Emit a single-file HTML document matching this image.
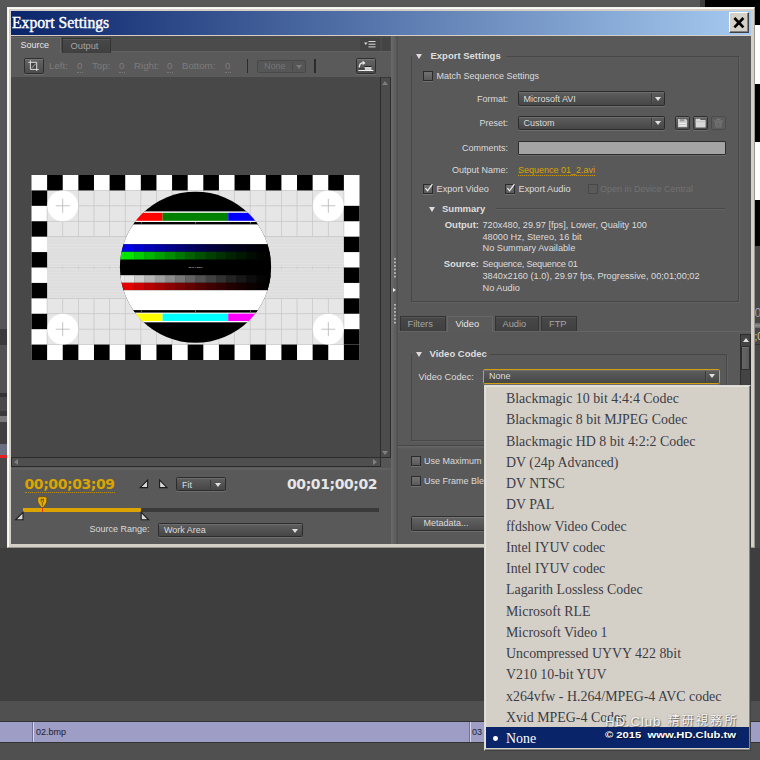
<!DOCTYPE html>
<html><head><meta charset="utf-8"><title>Export Settings</title>
<style>
html,body{margin:0;padding:0;}
body{width:760px;height:760px;overflow:hidden;position:relative;background:#3e3e3e;font-family:"Liberation Sans",sans-serif;font-size:9px;color:#dcdcdc;}
.a{position:absolute;}
.t{position:absolute;white-space:pre;line-height:12px;height:12px;}
.b{font-weight:bold;font-size:9.5px;color:#dedede;}
.s{font-size:9.2px;}
.r{text-align:right;}
.combo{position:absolute;box-sizing:border-box;border:1px solid #2c2c2c;border-radius:1.5px;background:linear-gradient(#5e5e5e,#464646);box-shadow:0 1px 0 rgba(255,255,255,.13),inset 0 1px 0 rgba(255,255,255,.1);}
.sep{position:absolute;width:1px;top:1px;bottom:1px;background:#3a3a3a;box-shadow:1px 0 0 rgba(255,255,255,.06);}
.combo .t{left:5px;top:0.5px;}
.arr{position:absolute;width:0;height:0;border-left:3.5px solid transparent;border-right:3.5px solid transparent;border-top:5px solid #e0e0e0;}
.cb{position:absolute;box-sizing:border-box;width:10px;height:10px;border:1px solid #2c2c2c;background:linear-gradient(#727272,#5a5a5a);box-shadow:0 1px 0 rgba(255,255,255,.15);}
.tab{position:absolute;box-sizing:border-box;height:15px;background:linear-gradient(#484848,#404040);border:1px solid #343434;border-bottom:none;box-shadow:inset 0 1px 0 rgba(255,255,255,.08);color:#a4a4a4;text-align:left;padding-left:8px;line-height:14px;white-space:pre;}
.tab.on{background:#5a5a5a;border-color:#666;color:#e6e6e6;box-shadow:none;}
.gb{position:absolute;box-sizing:border-box;border:1px solid #474747;box-shadow:1px 1px 0 rgba(255,255,255,.06);}
.btn{position:absolute;box-sizing:border-box;border:1px solid #2e2e2e;border-radius:1.5px;background:linear-gradient(#646464,#4c4c4c);box-shadow:0 1px 0 rgba(255,255,255,.12),inset 0 1px 0 rgba(255,255,255,.12);}
.pi{position:absolute;left:21.5px;margin-top:-.5px;white-space:pre;font-family:"Liberation Serif",serif;font-size:13.9px;line-height:21px;height:21px;color:#3c3c46;}
</style></head><body>

<!-- ===== background application (behind dialog) ===== -->
<div class="a" style="left:0;top:0;width:760px;height:8px;background:#585858"></div>
<div class="a" style="left:0;top:7px;width:8px;height:323px;background:#565656"></div>
<div class="a" style="left:0;top:329px;width:8px;height:16px;background:#3a3a3a"></div>
<div class="a" style="left:0;top:345px;width:8px;height:48px;background:#525252"></div>
<div class="a" style="left:0;top:393px;width:8px;height:4px;background:#333"></div>
<div class="a" style="left:0;top:397px;width:8px;height:14px;background:#4a4a4a"></div>
<div class="a" style="left:0;top:411px;width:8px;height:5px;background:#3a3a3a"></div>
<div class="a" style="left:0;top:416px;width:8px;height:6px;background:#7a7a7a"></div>
<div class="a" style="left:0;top:422px;width:8px;height:22px;background:#404040"></div>
<div class="a" style="left:0;top:444px;width:8px;height:11px;background:#6c6f80"></div>
<div class="a" style="left:0;top:455px;width:8px;height:3px;background:#e62020"></div>
<div class="a" style="left:0;top:458px;width:8px;height:100px;background:#484848"></div>
<!-- right strip -->
<div class="a" style="left:752px;top:0;width:8px;height:25px;background:#000"></div>
<div class="a" style="left:752px;top:25px;width:8px;height:59px;background:#fff"></div>
<div class="a" style="left:752px;top:84px;width:8px;height:58px;background:#000"></div>
<div class="a" style="left:752px;top:142px;width:8px;height:58px;background:#fff"></div>
<div class="a" style="left:752px;top:200px;width:8px;height:46px;background:#000"></div>
<div class="a" style="left:752px;top:246px;width:8px;height:320px;background:#484848"></div>
<div class="a" style="left:700px;top:0;width:5px;height:8px;background:#3c3c3c"></div>
<div class="a" style="left:704.5px;top:0;width:56px;height:8px;background:#000"></div>
<div class="t" style="left:754.5px;top:305.5px;font-size:12px;line-height:14px;color:#9ca2b6;">0.</div>
<div class="a" style="left:755px;top:322.5px;width:5px;height:5px;background:linear-gradient(#6a6a6a,#8c8c8c 50%,#6a6a6a)"></div>
<div class="t" style="left:754.5px;top:330.5px;font-size:10px;color:#d8d0a8;">;0</div><div class="a" style="left:755px;top:343.5px;width:5px;height:1px;background:#333"></div>
<!-- bottom timeline -->
<div class="a" style="left:0;top:548px;width:760px;height:153px;background:#3e3e3e"></div>
<div class="a" style="left:0;top:701px;width:760px;height:59px;background:#505050"></div>
<div class="a" style="left:0;top:721px;width:760px;height:22px;background:#333"></div>
<div class="a" style="left:0;top:722px;width:760px;height:20px;background:#9d9dc6"></div>
<div class="a" style="left:33px;top:722px;width:1px;height:20px;background:#d8d8e8"></div>
<div class="a" style="left:32px;top:722px;width:1px;height:20px;background:#70709a"></div>
<div class="a" style="left:469px;top:722px;width:1px;height:20px;background:#70709a"></div>
<div class="a" style="left:470px;top:722px;width:1px;height:20px;background:#d8d8e8"></div>
<div class="t" style="left:36px;top:726px;color:#1c1c30;font-size:9px;">02.bmp</div>
<div class="t" style="left:472px;top:726px;color:#1c1c30;font-size:9px;">03</div>

<!-- ===== dialog window ===== -->
<div class="a" id="win" style="left:7px;top:7px;width:748px;height:541px;background:#d4d0c8;box-sizing:border-box;border:1px solid #f4f2ec;border-right-color:#9a978f;border-bottom-color:#9a978f;box-shadow:inset 1px 1px 0 #fbfaf6;"></div>
<div class="a" style="left:11px;top:11px;width:740px;height:24px;background:linear-gradient(90deg,#0a246a 0%,#a6caf0 100%)"></div>
<div class="t" style="left:12px;top:13px;font-family:'Liberation Serif',serif;font-size:15.7px;line-height:20px;height:20px;color:#fff;-webkit-text-stroke:.4px #fff;">Export Settings</div>
<!-- close button -->
<div class="a" style="left:729px;top:12px;width:20px;height:21px;box-sizing:border-box;background:#d4d0c8;border:1px solid #fff;border-right-color:#404040;border-bottom-color:#404040;box-shadow:inset -1px -1px 0 #808080;"></div>
<svg class="a" style="left:729px;top:12px" width="20" height="21" viewBox="0 0 20 21"><path d="M5.4 6 L14.4 15.4 M14.4 6 L5.4 15.4" stroke="#000" stroke-width="2.7" fill="none"/></svg>

<!-- content bg -->
<div class="a" style="left:11px;top:36px;width:740px;height:508px;background:#595959"></div>

<!-- ===== left panel ===== -->
<div class="a" style="left:11px;top:36px;width:380px;height:16px;background:#4b4b4b"></div>
<div class="a" style="left:11px;top:52px;width:380px;height:25px;background:#5a5a5a"></div>
<div class="a" style="left:11px;top:51px;width:380px;height:1px;background:#606060"></div>
<div class="tab on" style="left:11px;top:37px;width:50px;height:16px;border-left:none;padding-left:9.4px;">Source</div>
<div class="tab" style="left:61.5px;top:37.5px;width:49px;padding-left:8px;font-size:9.3px;">Output</div>
<!-- panel menu -->
<div class="a" style="left:360px;top:38px;width:20px;height:13px;background:#444;border-radius:1px;"></div>
<svg class="a" style="left:360px;top:38px" width="20" height="13"><path d="M4 4.5h3.6l-1.8 2.4z" fill="#d8d8d8"/><path d="M8.5 3.5h7M8.5 6.2h7M8.5 8.9h7" stroke="#d8d8d8" stroke-width="1"/></svg>
<div class="a" style="left:382px;top:38px;width:8px;height:13px;background:#444;"></div>
<!-- crop toolbar -->
<div class="btn" style="left:24px;top:58px;width:20px;height:16px;border-radius:1.5px;"></div>
<svg class="a" style="left:24px;top:58px" width="20" height="16"><rect x="6.9" y="4.8" width="5.4" height="6.2" fill="#444"/><path d="M6.4 2.4v9h8.4M4.3 4.3h8.4v8.7" stroke="#dcdcdc" stroke-width="1" fill="none"/><path d="M7.4 10.4l4.5-4.9" stroke="#c8c8c8" stroke-width=".8"/></svg>
<div class="t" style="left:49px;top:60px;color:#7c7c7c;font-size:9.7px;">Left:</div>
<div class="t" style="left:76.5px;top:60px;color:#7c7c7c;font-size:9.7px;border-bottom:1px dotted #787878;height:11.5px;padding:0 .5px;">0</div>
<div class="t" style="left:92px;top:60px;color:#7c7c7c;font-size:9.7px;">Top:</div>
<div class="t" style="left:118.5px;top:60px;color:#7c7c7c;font-size:9.7px;border-bottom:1px dotted #787878;height:11.5px;padding:0 .5px;">0</div>
<div class="t" style="left:134px;top:60px;color:#7c7c7c;font-size:9.7px;">Right:</div>
<div class="t" style="left:166.5px;top:60px;color:#7c7c7c;font-size:9.7px;border-bottom:1px dotted #787878;height:11.5px;padding:0 .5px;">0</div>
<div class="t" style="left:182px;top:60px;color:#7c7c7c;font-size:9.7px;">Bottom:</div>
<div class="t" style="left:224.5px;top:60px;color:#7c7c7c;font-size:9.7px;border-bottom:1px dotted #787878;height:11.5px;padding:0 .5px;">0</div>
<div class="a" style="left:246.6px;top:59px;width:1.6px;height:13.6px;background:#2c2c2c;"></div>
<div class="a" style="left:257px;top:60px;width:49px;height:13px;box-sizing:border-box;border:1px solid #484848;border-radius:2px;background:#565656;"></div>
<div class="t" style="left:264px;top:60px;color:#757575;">None</div>
<div class="a" style="left:292px;top:62px;width:1px;height:9px;background:#4a4a4a;"></div>
<div class="arr" style="left:296px;top:65px;border-top-color:#7a7a7a;border-left-width:3px;border-right-width:3px;border-top-width:4px;"></div>
<div class="a" style="left:314.3px;top:59px;width:1.6px;height:13.6px;background:#2c2c2c;"></div>
<div class="btn" style="left:355.5px;top:58px;width:20.5px;height:16px;border-radius:1.5px;"></div>
<svg class="a" style="left:355.5px;top:58px" width="21" height="16"><rect x="2.4" y="11.9" width="15" height="1.1" fill="#f0f0f0"/><rect x="8.6" y="9" width="6.9" height="2.9" fill="#d6d6d6"/><rect x="8.6" y="8" width="6.9" height="1" fill="#222"/><rect x="2.6" y="10" width="6" height="1.7" fill="#3e3e3e"/><path d="M3.3 9.4Q3.3 4.9 7 4.9" stroke="#e8e8e8" stroke-width="1.3" fill="none"/><path d="M6.6 2.5L9.5 4.9L6.6 7.2z" fill="#e8e8e8"/></svg>

<!-- preview area -->
<div class="a" style="left:11px;top:77px;width:369px;height:380.5px;background:#484848;"></div>
<svg class="a" style="left:0;top:0" width="400" height="400" viewBox="0 0 400 400">
<rect x="31.5" y="175" width="328" height="185" fill="#fff"/>
<rect x="47.12" y="190.42" width="296.76" height="154.17" fill="#e6e6e6"/>
<rect x="47.12" y="236.67" width="296.76" height="61.67" fill="#dedede"/>
<rect x="47.12" y="238.17" width="296.76" height="0.8" fill="#e4e4e4"/>
<rect x="47.12" y="241.27" width="296.76" height="0.8" fill="#e4e4e4"/>
<rect x="47.12" y="244.37" width="296.76" height="0.8" fill="#e4e4e4"/>
<rect x="47.12" y="247.47" width="296.76" height="0.8" fill="#e4e4e4"/>
<rect x="47.12" y="250.57" width="296.76" height="0.8" fill="#e4e4e4"/>
<rect x="47.12" y="253.67" width="296.76" height="0.8" fill="#e4e4e4"/>
<rect x="47.12" y="256.77" width="296.76" height="0.8" fill="#e4e4e4"/>
<rect x="47.12" y="259.87" width="296.76" height="0.8" fill="#e4e4e4"/>
<rect x="47.12" y="262.97" width="296.76" height="0.8" fill="#e4e4e4"/>
<rect x="47.12" y="266.07" width="296.76" height="0.8" fill="#e4e4e4"/>
<rect x="47.12" y="269.17" width="296.76" height="0.8" fill="#e4e4e4"/>
<rect x="47.12" y="272.27" width="296.76" height="0.8" fill="#e4e4e4"/>
<rect x="47.12" y="275.37" width="296.76" height="0.8" fill="#e4e4e4"/>
<rect x="47.12" y="278.47" width="296.76" height="0.8" fill="#e4e4e4"/>
<rect x="47.12" y="281.57" width="296.76" height="0.8" fill="#e4e4e4"/>
<rect x="47.12" y="284.67" width="296.76" height="0.8" fill="#e4e4e4"/>
<rect x="47.12" y="287.77" width="296.76" height="0.8" fill="#e4e4e4"/>
<rect x="47.12" y="290.87" width="296.76" height="0.8" fill="#e4e4e4"/>
<rect x="47.12" y="293.97" width="296.76" height="0.8" fill="#e4e4e4"/>
<rect x="47.12" y="297.07" width="296.76" height="0.8" fill="#e4e4e4"/>
<rect x="46.77" y="190.42" width="0.7" height="46.25" fill="#c4c4c4"/>
<rect x="46.77" y="298.33" width="0.7" height="46.25" fill="#c4c4c4"/>
<rect x="46.77" y="265.50" width="0.7" height="4" fill="#cfcfcf"/>
<rect x="62.39" y="190.42" width="0.7" height="46.25" fill="#c4c4c4"/>
<rect x="62.39" y="298.33" width="0.7" height="46.25" fill="#c4c4c4"/>
<rect x="62.39" y="265.50" width="0.7" height="4" fill="#cfcfcf"/>
<rect x="78.01" y="190.42" width="0.7" height="46.25" fill="#c4c4c4"/>
<rect x="78.01" y="298.33" width="0.7" height="46.25" fill="#c4c4c4"/>
<rect x="78.01" y="265.50" width="0.7" height="4" fill="#cfcfcf"/>
<rect x="93.63" y="190.42" width="0.7" height="46.25" fill="#c4c4c4"/>
<rect x="93.63" y="298.33" width="0.7" height="46.25" fill="#c4c4c4"/>
<rect x="93.63" y="265.50" width="0.7" height="4" fill="#cfcfcf"/>
<rect x="109.25" y="190.42" width="0.7" height="46.25" fill="#c4c4c4"/>
<rect x="109.25" y="298.33" width="0.7" height="46.25" fill="#c4c4c4"/>
<rect x="109.25" y="265.50" width="0.7" height="4" fill="#cfcfcf"/>
<rect x="124.86" y="190.42" width="0.7" height="46.25" fill="#c4c4c4"/>
<rect x="124.86" y="298.33" width="0.7" height="46.25" fill="#c4c4c4"/>
<rect x="124.86" y="265.50" width="0.7" height="4" fill="#cfcfcf"/>
<rect x="140.48" y="190.42" width="0.7" height="46.25" fill="#c4c4c4"/>
<rect x="140.48" y="298.33" width="0.7" height="46.25" fill="#c4c4c4"/>
<rect x="140.48" y="265.50" width="0.7" height="4" fill="#cfcfcf"/>
<rect x="156.10" y="190.42" width="0.7" height="46.25" fill="#c4c4c4"/>
<rect x="156.10" y="298.33" width="0.7" height="46.25" fill="#c4c4c4"/>
<rect x="156.10" y="265.50" width="0.7" height="4" fill="#cfcfcf"/>
<rect x="171.72" y="190.42" width="0.7" height="46.25" fill="#c4c4c4"/>
<rect x="171.72" y="298.33" width="0.7" height="46.25" fill="#c4c4c4"/>
<rect x="171.72" y="265.50" width="0.7" height="4" fill="#cfcfcf"/>
<rect x="187.34" y="190.42" width="0.7" height="46.25" fill="#c4c4c4"/>
<rect x="187.34" y="298.33" width="0.7" height="46.25" fill="#c4c4c4"/>
<rect x="187.34" y="265.50" width="0.7" height="4" fill="#cfcfcf"/>
<rect x="202.96" y="190.42" width="0.7" height="46.25" fill="#c4c4c4"/>
<rect x="202.96" y="298.33" width="0.7" height="46.25" fill="#c4c4c4"/>
<rect x="202.96" y="265.50" width="0.7" height="4" fill="#cfcfcf"/>
<rect x="218.58" y="190.42" width="0.7" height="46.25" fill="#c4c4c4"/>
<rect x="218.58" y="298.33" width="0.7" height="46.25" fill="#c4c4c4"/>
<rect x="218.58" y="265.50" width="0.7" height="4" fill="#cfcfcf"/>
<rect x="234.20" y="190.42" width="0.7" height="46.25" fill="#c4c4c4"/>
<rect x="234.20" y="298.33" width="0.7" height="46.25" fill="#c4c4c4"/>
<rect x="234.20" y="265.50" width="0.7" height="4" fill="#cfcfcf"/>
<rect x="249.82" y="190.42" width="0.7" height="46.25" fill="#c4c4c4"/>
<rect x="249.82" y="298.33" width="0.7" height="46.25" fill="#c4c4c4"/>
<rect x="249.82" y="265.50" width="0.7" height="4" fill="#cfcfcf"/>
<rect x="265.44" y="190.42" width="0.7" height="46.25" fill="#c4c4c4"/>
<rect x="265.44" y="298.33" width="0.7" height="46.25" fill="#c4c4c4"/>
<rect x="265.44" y="265.50" width="0.7" height="4" fill="#cfcfcf"/>
<rect x="281.05" y="190.42" width="0.7" height="46.25" fill="#c4c4c4"/>
<rect x="281.05" y="298.33" width="0.7" height="46.25" fill="#c4c4c4"/>
<rect x="281.05" y="265.50" width="0.7" height="4" fill="#cfcfcf"/>
<rect x="296.67" y="190.42" width="0.7" height="46.25" fill="#c4c4c4"/>
<rect x="296.67" y="298.33" width="0.7" height="46.25" fill="#c4c4c4"/>
<rect x="296.67" y="265.50" width="0.7" height="4" fill="#cfcfcf"/>
<rect x="312.29" y="190.42" width="0.7" height="46.25" fill="#c4c4c4"/>
<rect x="312.29" y="298.33" width="0.7" height="46.25" fill="#c4c4c4"/>
<rect x="312.29" y="265.50" width="0.7" height="4" fill="#cfcfcf"/>
<rect x="327.91" y="190.42" width="0.7" height="46.25" fill="#c4c4c4"/>
<rect x="327.91" y="298.33" width="0.7" height="46.25" fill="#c4c4c4"/>
<rect x="327.91" y="265.50" width="0.7" height="4" fill="#cfcfcf"/>
<rect x="343.53" y="190.42" width="0.7" height="46.25" fill="#c4c4c4"/>
<rect x="343.53" y="298.33" width="0.7" height="46.25" fill="#c4c4c4"/>
<rect x="343.53" y="265.50" width="0.7" height="4" fill="#cfcfcf"/>
<rect x="47.12" y="190.07" width="296.76" height="0.7" fill="#c4c4c4"/>
<rect x="47.12" y="205.48" width="296.76" height="0.7" fill="#c4c4c4"/>
<rect x="47.12" y="220.90" width="296.76" height="0.7" fill="#c4c4c4"/>
<rect x="47.12" y="236.32" width="296.76" height="0.7" fill="#c4c4c4"/>
<rect x="47.12" y="297.98" width="296.76" height="0.7" fill="#c4c4c4"/>
<rect x="47.12" y="313.40" width="296.76" height="0.7" fill="#c4c4c4"/>
<rect x="47.12" y="328.82" width="296.76" height="0.7" fill="#c4c4c4"/>
<rect x="47.12" y="344.23" width="296.76" height="0.7" fill="#c4c4c4"/>
<rect x="47.12" y="267.20" width="296.76" height="0.6" fill="#cfcfcf"/>
<rect x="31.50" y="344.58" width="15.62" height="15.42" fill="#000"/>
<rect x="47.12" y="175" width="15.62" height="15.42" fill="#000"/>
<rect x="62.74" y="344.58" width="15.62" height="15.42" fill="#000"/>
<rect x="78.36" y="175" width="15.62" height="15.42" fill="#000"/>
<rect x="93.98" y="344.58" width="15.62" height="15.42" fill="#000"/>
<rect x="109.60" y="175" width="15.62" height="15.42" fill="#000"/>
<rect x="125.21" y="344.58" width="15.62" height="15.42" fill="#000"/>
<rect x="140.83" y="175" width="15.62" height="15.42" fill="#000"/>
<rect x="156.45" y="344.58" width="15.62" height="15.42" fill="#000"/>
<rect x="172.07" y="175" width="15.62" height="15.42" fill="#000"/>
<rect x="187.69" y="344.58" width="15.62" height="15.42" fill="#000"/>
<rect x="203.31" y="175" width="15.62" height="15.42" fill="#000"/>
<rect x="218.93" y="344.58" width="15.62" height="15.42" fill="#000"/>
<rect x="234.55" y="175" width="15.62" height="15.42" fill="#000"/>
<rect x="250.17" y="344.58" width="15.62" height="15.42" fill="#000"/>
<rect x="265.79" y="175" width="15.62" height="15.42" fill="#000"/>
<rect x="281.40" y="344.58" width="15.62" height="15.42" fill="#000"/>
<rect x="297.02" y="175" width="15.62" height="15.42" fill="#000"/>
<rect x="312.64" y="344.58" width="15.62" height="15.42" fill="#000"/>
<rect x="328.26" y="175" width="15.62" height="15.42" fill="#000"/>
<rect x="343.88" y="344.58" width="15.62" height="15.42" fill="#000"/>
<rect x="31.50" y="190.42" width="15.62" height="15.42" fill="#000"/>
<rect x="343.88" y="205.83" width="15.62" height="15.42" fill="#000"/>
<rect x="31.50" y="221.25" width="15.62" height="15.42" fill="#000"/>
<rect x="343.88" y="236.67" width="15.62" height="15.42" fill="#000"/>
<rect x="31.50" y="252.08" width="15.62" height="15.42" fill="#000"/>
<rect x="343.88" y="267.50" width="15.62" height="15.42" fill="#000"/>
<rect x="31.50" y="282.92" width="15.62" height="15.42" fill="#000"/>
<rect x="343.88" y="298.33" width="15.62" height="15.42" fill="#000"/>
<rect x="31.50" y="313.75" width="15.62" height="15.42" fill="#000"/>
<rect x="343.88" y="329.17" width="15.62" height="15.42" fill="#000"/>
<circle cx="62.74" cy="205.83" r="15.4" fill="#fff"/>
<rect x="55.74" y="205.43" width="14" height="0.8" fill="#b4b4b4"/>
<rect x="62.34" y="198.83" width="0.8" height="14" fill="#b4b4b4"/>
<circle cx="328.26" cy="205.83" r="15.4" fill="#fff"/>
<rect x="321.26" y="205.43" width="14" height="0.8" fill="#b4b4b4"/>
<rect x="327.86" y="198.83" width="0.8" height="14" fill="#b4b4b4"/>
<circle cx="62.74" cy="329.17" r="15.4" fill="#fff"/>
<rect x="55.74" y="328.77" width="14" height="0.8" fill="#b4b4b4"/>
<rect x="62.34" y="322.17" width="0.8" height="14" fill="#b4b4b4"/>
<circle cx="328.26" cy="329.17" r="15.4" fill="#fff"/>
<rect x="321.26" y="328.77" width="14" height="0.8" fill="#b4b4b4"/>
<rect x="327.86" y="322.17" width="0.8" height="14" fill="#b4b4b4"/>
<clipPath id="cc"><circle cx="195.5" cy="267.25" r="75.6"/></clipPath>
<g clip-path="url(#cc)">
<rect x="118.90" y="190.65" width="153.20" height="153.20" fill="#000"/>
<rect x="118.90" y="211.40" width="153.20" height="10.60" fill="#fff"/>
<rect x="118.90" y="212.8" width="43.70" height="8.00" fill="#ff0000"/>
<rect x="162.6" y="212.8" width="65.60" height="8.00" fill="#008000"/>
<rect x="228.2" y="212.8" width="43.90" height="8.00" fill="#0000ff"/>
<rect x="118.90" y="222.00" width="153.20" height="2.40" fill="#000"/>
<rect x="118.90" y="224.40" width="153.20" height="19.90" fill="#fff"/>
<rect x="113.90" y="244.3" width="10.50" height="7.50" fill="rgb(0,0,236)"/>
<rect x="124.10" y="244.3" width="10.50" height="7.50" fill="rgb(0,0,230)"/>
<rect x="134.30" y="244.3" width="10.50" height="7.50" fill="rgb(0,0,206)"/>
<rect x="144.50" y="244.3" width="10.50" height="7.50" fill="rgb(0,0,182)"/>
<rect x="154.70" y="244.3" width="10.50" height="7.50" fill="rgb(0,0,160)"/>
<rect x="164.90" y="244.3" width="10.50" height="7.50" fill="rgb(0,0,139)"/>
<rect x="175.10" y="244.3" width="10.50" height="7.50" fill="rgb(0,0,119)"/>
<rect x="185.30" y="244.3" width="10.50" height="7.50" fill="rgb(0,0,99)"/>
<rect x="195.50" y="244.3" width="10.50" height="7.50" fill="rgb(0,0,81)"/>
<rect x="205.70" y="244.3" width="10.50" height="7.50" fill="rgb(0,0,65)"/>
<rect x="215.90" y="244.3" width="10.50" height="7.50" fill="rgb(0,0,49)"/>
<rect x="226.10" y="244.3" width="10.50" height="7.50" fill="rgb(0,0,35)"/>
<rect x="236.30" y="244.3" width="10.50" height="7.50" fill="rgb(0,0,23)"/>
<rect x="246.50" y="244.3" width="10.50" height="7.50" fill="rgb(0,0,12)"/>
<rect x="256.70" y="244.3" width="10.50" height="7.50" fill="rgb(0,0,4)"/>
<rect x="266.90" y="244.3" width="10.50" height="7.50" fill="rgb(0,0,0)"/>
<rect x="113.90" y="251.8" width="10.50" height="7.70" fill="rgb(0,236,0)"/>
<rect x="124.10" y="251.8" width="10.50" height="7.70" fill="rgb(0,230,0)"/>
<rect x="134.30" y="251.8" width="10.50" height="7.70" fill="rgb(0,206,0)"/>
<rect x="144.50" y="251.8" width="10.50" height="7.70" fill="rgb(0,182,0)"/>
<rect x="154.70" y="251.8" width="10.50" height="7.70" fill="rgb(0,160,0)"/>
<rect x="164.90" y="251.8" width="10.50" height="7.70" fill="rgb(0,139,0)"/>
<rect x="175.10" y="251.8" width="10.50" height="7.70" fill="rgb(0,119,0)"/>
<rect x="185.30" y="251.8" width="10.50" height="7.70" fill="rgb(0,99,0)"/>
<rect x="195.50" y="251.8" width="10.50" height="7.70" fill="rgb(0,81,0)"/>
<rect x="205.70" y="251.8" width="10.50" height="7.70" fill="rgb(0,65,0)"/>
<rect x="215.90" y="251.8" width="10.50" height="7.70" fill="rgb(0,49,0)"/>
<rect x="226.10" y="251.8" width="10.50" height="7.70" fill="rgb(0,35,0)"/>
<rect x="236.30" y="251.8" width="10.50" height="7.70" fill="rgb(0,23,0)"/>
<rect x="246.50" y="251.8" width="10.50" height="7.70" fill="rgb(0,12,0)"/>
<rect x="256.70" y="251.8" width="10.50" height="7.70" fill="rgb(0,4,0)"/>
<rect x="266.90" y="251.8" width="10.50" height="7.70" fill="rgb(0,0,0)"/>
<rect x="113.90" y="275.2" width="10.50" height="7.60" fill="rgb(236,236,236)"/>
<rect x="124.10" y="275.2" width="10.50" height="7.60" fill="rgb(230,230,230)"/>
<rect x="134.30" y="275.2" width="10.50" height="7.60" fill="rgb(206,206,206)"/>
<rect x="144.50" y="275.2" width="10.50" height="7.60" fill="rgb(182,182,182)"/>
<rect x="154.70" y="275.2" width="10.50" height="7.60" fill="rgb(160,160,160)"/>
<rect x="164.90" y="275.2" width="10.50" height="7.60" fill="rgb(139,139,139)"/>
<rect x="175.10" y="275.2" width="10.50" height="7.60" fill="rgb(119,119,119)"/>
<rect x="185.30" y="275.2" width="10.50" height="7.60" fill="rgb(99,99,99)"/>
<rect x="195.50" y="275.2" width="10.50" height="7.60" fill="rgb(81,81,81)"/>
<rect x="205.70" y="275.2" width="10.50" height="7.60" fill="rgb(65,65,65)"/>
<rect x="215.90" y="275.2" width="10.50" height="7.60" fill="rgb(49,49,49)"/>
<rect x="226.10" y="275.2" width="10.50" height="7.60" fill="rgb(35,35,35)"/>
<rect x="236.30" y="275.2" width="10.50" height="7.60" fill="rgb(23,23,23)"/>
<rect x="246.50" y="275.2" width="10.50" height="7.60" fill="rgb(12,12,12)"/>
<rect x="256.70" y="275.2" width="10.50" height="7.60" fill="rgb(4,4,4)"/>
<rect x="266.90" y="275.2" width="10.50" height="7.60" fill="rgb(0,0,0)"/>
<rect x="113.90" y="282.8" width="10.50" height="7.40" fill="rgb(236,0,0)"/>
<rect x="124.10" y="282.8" width="10.50" height="7.40" fill="rgb(230,0,0)"/>
<rect x="134.30" y="282.8" width="10.50" height="7.40" fill="rgb(206,0,0)"/>
<rect x="144.50" y="282.8" width="10.50" height="7.40" fill="rgb(182,0,0)"/>
<rect x="154.70" y="282.8" width="10.50" height="7.40" fill="rgb(160,0,0)"/>
<rect x="164.90" y="282.8" width="10.50" height="7.40" fill="rgb(139,0,0)"/>
<rect x="175.10" y="282.8" width="10.50" height="7.40" fill="rgb(119,0,0)"/>
<rect x="185.30" y="282.8" width="10.50" height="7.40" fill="rgb(99,0,0)"/>
<rect x="195.50" y="282.8" width="10.50" height="7.40" fill="rgb(81,0,0)"/>
<rect x="205.70" y="282.8" width="10.50" height="7.40" fill="rgb(65,0,0)"/>
<rect x="215.90" y="282.8" width="10.50" height="7.40" fill="rgb(49,0,0)"/>
<rect x="226.10" y="282.8" width="10.50" height="7.40" fill="rgb(35,0,0)"/>
<rect x="236.30" y="282.8" width="10.50" height="7.40" fill="rgb(23,0,0)"/>
<rect x="246.50" y="282.8" width="10.50" height="7.40" fill="rgb(12,0,0)"/>
<rect x="256.70" y="282.8" width="10.50" height="7.40" fill="rgb(4,0,0)"/>
<rect x="266.90" y="282.8" width="10.50" height="7.40" fill="rgb(0,0,0)"/>
<rect x="118.90" y="290.20" width="153.20" height="20.10" fill="#fff"/>
<rect x="118.90" y="310.30" width="153.20" height="2.30" fill="#000"/>
<rect x="118.90" y="312.60" width="153.20" height="9.70" fill="#fff"/>
<rect x="118.90" y="313.6" width="43.70" height="7.40" fill="#ffff00"/>
<rect x="162.6" y="313.6" width="65.60" height="7.40" fill="#00ffff"/>
<rect x="228.2" y="313.6" width="43.90" height="7.40" fill="#ff00ff"/>
<rect x="140.9" y="222.2" width="0.8" height="1.2" fill="#aaa"/>
<rect x="140.9" y="310.6" width="0.8" height="1.2" fill="#aaa"/>
<rect x="195.1" y="222.2" width="0.8" height="1.2" fill="#aaa"/>
<rect x="195.1" y="310.6" width="0.8" height="1.2" fill="#aaa"/>
<rect x="250.2" y="222.2" width="0.8" height="1.2" fill="#aaa"/>
<rect x="250.2" y="310.6" width="0.8" height="1.2" fill="#aaa"/>
</g>
<text x="195.5" y="268.3" font-family="Liberation Sans, sans-serif" font-size="2.4" fill="#e8e8e8" text-anchor="middle">3840 X 2160</text>
</svg>
<!-- v scrollbar -->
<div class="a" style="left:380px;top:77px;width:11px;height:381px;background:#4c4c4c;box-sizing:border-box;border:1px solid #2c2c2c;border-top-color:#383838;"></div>
<div class="a" style="left:382px;top:81px;width:0;height:0;border-left:3px solid transparent;border-right:3px solid transparent;border-bottom:4px solid #7c7c7c;"></div>
<div class="a" style="left:382.4px;top:450.6px;width:0;height:0;border-left:3px solid transparent;border-right:3px solid transparent;border-top:4px solid #808080;"></div>
<!-- h scrollbar -->
<div class="a" style="left:11px;top:457.3px;width:369.5px;height:10.2px;background:#4f4f4f;box-sizing:border-box;border:1px solid #2c2c2c;"></div>
<div class="a" style="left:14px;top:459.4px;width:0;height:0;border-top:3px solid transparent;border-bottom:3px solid transparent;border-right:4px solid #808080;"></div>
<div class="a" style="left:373px;top:459.4px;width:0;height:0;border-top:3px solid transparent;border-bottom:3px solid transparent;border-left:4px solid #808080;"></div>
<div class="a" style="left:380.5px;top:458px;width:10.5px;height:10px;background:#555;"></div>

<div class="a" style="left:11px;top:467.5px;width:380px;height:3px;background:linear-gradient(#636363,#595959);"></div>
<!-- transport -->
<div class="t" id="tc1" style="left:24.5px;top:476px;font-family:'DejaVu Sans','Liberation Sans',sans-serif;font-weight:bold;font-size:14px;letter-spacing:-.42px;line-height:16px;height:15.5px;color:#dba400;border-bottom:1px dotted #b88c00;">00;00;03;09</div>
<div class="t" id="tc2" style="left:287px;top:476px;font-family:'DejaVu Sans','Liberation Sans',sans-serif;font-weight:bold;font-size:14px;letter-spacing:-.42px;line-height:16px;height:16px;color:#e6e6e6;">00;01;00;02</div>
<svg class="a" style="left:136px;top:476px" width="36" height="16"><path d="M4.2 11.6h7.4v-7.4z" fill="#d8d8d8" stroke="#1c1c1c" stroke-width="1.1"/><path d="M31 11.6h-7.4v-7.4z" fill="#d8d8d8" stroke="#1c1c1c" stroke-width="1.1"/></svg>
<div class="combo" style="left:176px;top:476.8px;width:50px;height:14.6px;"><div class="t" style="top:1px;">Fit</div><div class="a" style="left:33px;top:2px;width:1px;height:9px;background:#3a3a3a"></div><div class="arr" style="left:38px;top:5px;border-left-width:3px;border-right-width:3px;border-top-width:4px;"></div></div>
<!-- time bar -->
<div class="a" style="left:23px;top:508px;width:356px;height:4px;background:#3a3a3a;"></div>
<div class="a" style="left:23px;top:508px;width:118px;height:4px;background:#dba400;"></div>
<div class="a" style="left:41.6px;top:508px;width:1.2px;height:4px;background:#ee3a10;"></div>
<svg class="a" style="left:36px;top:495px" width="13" height="14"><path d="M3.6 1.7h5.4q1.8 0 1.8 1.8v2.6q0 1.5-1.1 3l-2.2 3.3h-2.4l-2.2-3.3q-1.1-1.5-1.1-3v-2.6q0-1.8 1.8-1.8z" fill="#e6b008" stroke="#6a4e00" stroke-width=".8"/><path d="M5.2 3.6v3.6M7.4 3.6v3.6M5.2 4.6h2.2M6.3 7.2v3.6" stroke="#5a4200" stroke-width=".8" fill="none"/></svg>
<svg class="a" style="left:13px;top:510px" width="140" height="12"><path d="M2.6 9.8h7.4v-7.4z" fill="#d8d8d8" stroke="#1c1c1c" stroke-width="1.1"/><path d="M135.6 9.8h-7.4v-7.4z" fill="#d8d8d8" stroke="#1c1c1c" stroke-width="1.1"/></svg>
<div class="t" style="left:89.5px;top:522.8px;">Source Range:</div>
<div class="combo" style="left:158px;top:523px;width:145px;height:14px;"><div class="t" style="top:-0.5px;">Work Area</div><div class="arr" style="left:133px;top:4.5px;border-left-width:3px;border-right-width:3px;border-top-width:4px;"></div></div>

<!-- divider -->
<div class="a" style="left:391px;top:36px;width:7px;height:508px;background:linear-gradient(90deg,#6a6a6a,#5e5e5e 60%,#4c4c4c);"></div>
<svg class="a" style="left:394px;top:257.8px" width="3" height="21"><rect x="0" y="0.00" width="1.9" height="1.7" fill="#b8b8b8"/><rect x="0" y="3.55" width="1.9" height="1.7" fill="#b8b8b8"/><rect x="0" y="7.10" width="1.9" height="1.7" fill="#b8b8b8"/><rect x="0" y="10.65" width="1.9" height="1.7" fill="#b8b8b8"/><rect x="0" y="14.20" width="1.9" height="1.7" fill="#b8b8b8"/><rect x="0" y="17.75" width="1.9" height="1.7" fill="#b8b8b8"/></svg>
<svg class="a" style="left:394px;top:303.8px" width="3" height="21"><rect x="0" y="0.00" width="1.9" height="1.7" fill="#b8b8b8"/><rect x="0" y="3.55" width="1.9" height="1.7" fill="#b8b8b8"/><rect x="0" y="7.10" width="1.9" height="1.7" fill="#b8b8b8"/><rect x="0" y="10.65" width="1.9" height="1.7" fill="#b8b8b8"/><rect x="0" y="14.20" width="1.9" height="1.7" fill="#b8b8b8"/><rect x="0" y="17.75" width="1.9" height="1.7" fill="#b8b8b8"/></svg>
<div class="a" style="left:393px;top:287.6px;width:0;height:0;border-top:2.4px solid transparent;border-bottom:2.4px solid transparent;border-left:3.2px solid #ececec;"></div>

<!-- ===== right panel ===== -->
<div class="gb" style="left:411px;top:56px;width:328px;height:246px;border-top:none;"></div>
<div class="a" style="left:506px;top:56px;width:233px;height:1px;background:#484848;"></div>
<div class="arr" style="left:416px;top:53.6px;border-top-color:#dcdcdc;"></div>
<div class="t b" style="left:430.5px;top:50px;">Export Settings</div>
<div class="cb" style="left:423px;top:71px;"></div>
<div class="t" style="left:436.5px;top:70px;">Match Sequence Settings</div>
<div class="t r" style="left:408px;width:100px;top:92.5px;">Format:</div>
<div class="combo" style="left:517.5px;top:91px;width:147.5px;height:14.5px;"><div class="t">Microsoft AVI</div><div class="sep" style="left:132px"></div><div class="arr" style="left:136.5px;top:4.8px;border-left-width:3px;border-right-width:3px;border-top-width:4px;"></div></div>
<div class="t r" style="left:408px;width:100px;top:116.5px;">Preset:</div>
<div class="combo" style="left:517.5px;top:115.5px;width:147.5px;height:14.5px;"><div class="t">Custom</div><div class="sep" style="left:132px"></div><div class="arr" style="left:136.5px;top:4.8px;border-left-width:3px;border-right-width:3px;border-top-width:4px;"></div></div>
<div class="btn" style="left:675px;top:115.5px;width:15px;height:14.5px;"></div>
<svg class="a" style="left:675px;top:115.5px" width="15" height="15"><path d="M3 3h7.6l1.6 1.5v6.8h-9.2z" fill="#d2d2d2"/><rect x="4.8" y="3" width="4.6" height="2.4" fill="#9a9a9a"/><rect x="4.4" y="7" width="6.2" height="3" fill="#f0f0f0"/><path d="M4.4 8.5h6.2" stroke="#b0b0b0" stroke-width=".7"/></svg>
<div class="btn" style="left:693px;top:115.5px;width:15px;height:14.5px;"></div>
<svg class="a" style="left:693px;top:115.5px" width="15" height="15"><path d="M2.6 3.6q0-.8.8-.8h3.4l1 1.2h4q.8 0 .8.8v6.6h-10z" fill="#d8d8d8"/><path d="M2.6 5.6h10" stroke="#b4b4b4" stroke-width=".7"/></svg>
<div class="a" style="left:711px;top:115.5px;width:15px;height:14.5px;box-sizing:border-box;border:1px solid #4c4c4c;border-radius:2px;background:#5c5c5c;"></div>
<svg class="a" style="left:711px;top:115.5px" width="15" height="15"><path d="M3 5h9M5.6 3.4h3.8" stroke="#787878" stroke-width="1.1" fill="none"/><path d="M4 5.8h7l-.5 5.8h-6z" fill="#737373"/><path d="M6 6.6v4M7.5 6.6v4M9 6.6v4" stroke="#5c5c5c" stroke-width=".6"/></svg>
<div class="t r" style="left:408px;width:100px;top:141.5px;">Comments:</div>
<div class="a" style="left:517.5px;top:140.5px;width:208px;height:14px;box-sizing:border-box;background:#a4a4a4;border:1px solid #2c2c2c;border-radius:1px;box-shadow:0 1px 0 rgba(255,255,255,.1);"></div>
<div class="t r" style="left:408px;width:100px;top:163.5px;">Output Name:</div>
<div class="t" style="left:518px;top:163.5px;color:#dba400;border-bottom:1px dotted #c89600;height:11px;">Sequence 01_2.avi</div>
<div class="cb" style="left:423px;top:184px;"></div>
<svg class="a" style="left:423px;top:182px" width="12" height="12"><path d="M2.4 6.2l2.2 2.6 4.8-6.6" stroke="#f0f0f0" stroke-width="1.3" fill="none"/></svg>
<div class="t s" style="left:436.5px;top:183px;">Export Video</div>
<div class="cb" style="left:505.3px;top:184px;"></div>
<svg class="a" style="left:505.3px;top:182px" width="12" height="12"><path d="M2.4 6.2l2.2 2.6 4.8-6.6" stroke="#f0f0f0" stroke-width="1.3" fill="none"/></svg>
<div class="t s" style="left:518.5px;top:183px;">Export Audio</div>
<div class="a" style="left:587.5px;top:184px;width:10px;height:10px;box-sizing:border-box;border:1px solid #484848;background:#5a5a5a;"></div>
<div class="t" style="left:600px;top:183px;color:#727272;">Open in Device Central</div>
<!-- summary -->
<div class="arr" style="left:428.8px;top:207px;border-top-color:#dcdcdc;border-left-width:3px;border-right-width:3px;"></div>
<div class="t b" style="left:442px;top:202.5px;">Summary</div>
<div class="a" style="left:496px;top:208px;width:229px;height:1px;background:#484848;box-shadow:0 1px 0 rgba(255,255,255,.06);"></div>
<div class="t b r" style="left:379px;width:100px;top:219px;">Output:</div>
<div class="t s" style="left:482.5px;top:219px;">720x480, 29.97 [fps], Lower, Quality 100</div>
<div class="t s" style="left:482.5px;top:230.5px;">48000 Hz, Stereo, 16 bit</div>
<div class="t s" style="left:482.5px;top:242px;">No Summary Available</div>
<div class="t b r" style="left:379px;width:100px;top:258px;">Source:</div>
<div class="t s" style="left:482.5px;top:258px;letter-spacing:-.26px;">Sequence, Sequence 01</div>
<div class="t s" style="left:482.5px;top:269.5px;">3840x2160 (1.0), 29.97 fps, Progressive, 00;01;00;02</div>
<div class="t s" style="left:482.5px;top:281.5px;">No Audio</div>
<!-- tabs -->
<div class="a" style="left:398px;top:331px;width:353px;height:1px;background:#646464;"></div>
<div class="tab" style="left:399.5px;top:315.5px;width:46px;padding-left:7px;font-size:9.3px;">Filters</div>
<div class="tab on" style="left:447px;top:315.5px;width:46px;height:16.5px;padding-left:7.5px;font-size:9.3px;">Video</div>
<div class="tab" style="left:494.5px;top:315.5px;width:44.5px;padding-left:7px;font-size:9.3px;">Audio</div>
<div class="tab" style="left:540.5px;top:315.5px;width:36px;padding-left:7.5px;font-size:9.3px;">FTP</div>
<!-- right scrollbar -->
<div class="a" style="left:740px;top:334px;width:11px;height:112px;background:#444;box-sizing:border-box;border:1px solid #2c2c2c;"></div>
<div class="a" style="left:743px;top:338px;width:0;height:0;border-left:3px solid transparent;border-right:3px solid transparent;border-bottom:4px solid #e0e0e0;"></div>
<div class="a" style="left:741px;top:346px;width:9px;height:23.5px;box-sizing:border-box;border:1px solid #2c2c2c;border-radius:1px;background:linear-gradient(90deg,#666,#5a5a5a);box-shadow:inset 0 1px 0 rgba(255,255,255,.12);"></div>
<!-- video codec -->
<div class="gb" style="left:411px;top:353.5px;width:316px;height:87px;"></div>
<div class="a" style="left:412px;top:348px;width:78px;height:5px;background:#595959;"></div><div class="a" style="left:412px;top:352px;width:78px;height:4px;background:#595959;"></div>
<div class="arr" style="left:416px;top:351.6px;border-top-color:#dcdcdc;"></div>
<div class="t b" style="left:429.5px;top:347.5px;">Video Codec</div>
<div class="t" style="left:418.5px;top:370.5px;font-size:9.25px;">Video Codec:</div>
<div class="combo" style="left:483px;top:368.5px;width:237px;height:15.5px;border:1.4px solid #cfa010;"><div class="t" style="top:0;">None</div><div class="sep" style="left:220.5px"></div><div class="arr" style="left:224.8px;top:4.5px;border-left-width:3px;border-right-width:3px;border-top-width:4px;"></div></div>
<div class="a" style="left:398px;top:444.5px;width:353px;height:1px;background:#474747;"></div><div class="a" style="left:398px;top:445.5px;width:353px;height:3.5px;background:linear-gradient(#676767,#595959);"></div>
<div class="cb" style="left:411px;top:456px;"></div>
<div class="t" style="left:424px;top:455px;">Use Maximum Render Quality</div>
<div class="cb" style="left:411px;top:476px;"></div>
<div class="t" style="left:424px;top:475px;">Use Frame Blending</div>
<div class="btn" style="left:411px;top:515.5px;width:80px;height:15.5px;"></div>
<div class="t" style="left:423.5px;top:517px;">Metadata...</div>

<!-- ===== dropdown popup ===== -->
<div class="a" id="pop" style="left:483.5px;top:384.5px;width:267.5px;height:366px;box-sizing:border-box;background:#d4d0c8;border:1px solid #dcd9d2;border-right-color:#404040;border-bottom-color:#404040;box-shadow:inset -1px -1px 0 #858585,inset 1px 1px 0 #e4e2dc;">
<div class="pi" style="top:3px;">Blackmagic 10 bit 4:4:4 Codec</div>
<div class="pi" style="top:24.3px;">Blackmagic 8 bit MJPEG Codec</div>
<div class="pi" style="top:45.5px;">Blackmagic HD 8 bit 4:2:2 Codec</div>
<div class="pi" style="top:66.8px;">DV (24p Advanced)</div>
<div class="pi" style="top:88px;">DV NTSC</div>
<div class="pi" style="top:109.3px;">DV PAL</div>
<div class="pi" style="top:130.5px;">ffdshow Video Codec</div>
<div class="pi" style="top:151.8px;">Intel IYUV codec</div>
<div class="pi" style="top:173px;">Intel IYUV codec</div>
<div class="pi" style="top:194.3px;">Lagarith Lossless Codec</div>
<div class="pi" style="top:215.5px;">Microsoft RLE</div>
<div class="pi" style="top:236.8px;">Microsoft Video 1</div>
<div class="pi" style="top:258px;">Uncompressed UYVY 422 8bit</div>
<div class="pi" style="top:279.3px;">V210 10-bit YUV</div>
<div class="pi" style="top:300.5px;">x264vfw - H.264/MPEG-4 AVC codec</div>
<div class="pi" style="top:321.8px;">Xvid MPEG-4 Codec</div>
<div class="a" style="left:1.5px;top:341.9px;width:262.5px;height:21.1px;background:#0a246a;"></div>
<div class="a" style="left:8.8px;top:350.4px;width:4.8px;height:4.8px;border-radius:50%;background:#fff;"></div>
<div class="pi" style="top:343px;color:#fff;">None</div>
</div>

<!-- watermark -->
<div class="t" id="wm1" style="left:605px;top:712.7px;font-family:'Liberation Sans','Noto Sans CJK TC',sans-serif;font-size:13.3px;line-height:18px;height:18px;color:#f6f6f6;letter-spacing:.85px;text-shadow:1px 1px 1px rgba(0,0,0,.45),0 0 2px rgba(0,0,0,.3);">HD.Club</div>
<div class="t" id="wm1b" style="left:667.6px;top:712.2px;font-family:'Liberation Sans','Noto Sans CJK TC',sans-serif;font-size:12px;line-height:18px;height:18px;color:#f6f6f6;letter-spacing:2.2px;text-shadow:1px 1px 1px rgba(0,0,0,.45),0 0 2px rgba(0,0,0,.3);">精研視務所</div>
<div class="t" id="wm2" style="left:604.5px;top:727.5px;font-size:9.6px;font-weight:bold;line-height:14px;height:14px;color:#fff;transform-origin:0 0;transform:scaleX(1.167);text-shadow:1px 1px 1px rgba(0,0,0,.6);">© 2015  www.HD.Club.tw</div>
</body></html>
